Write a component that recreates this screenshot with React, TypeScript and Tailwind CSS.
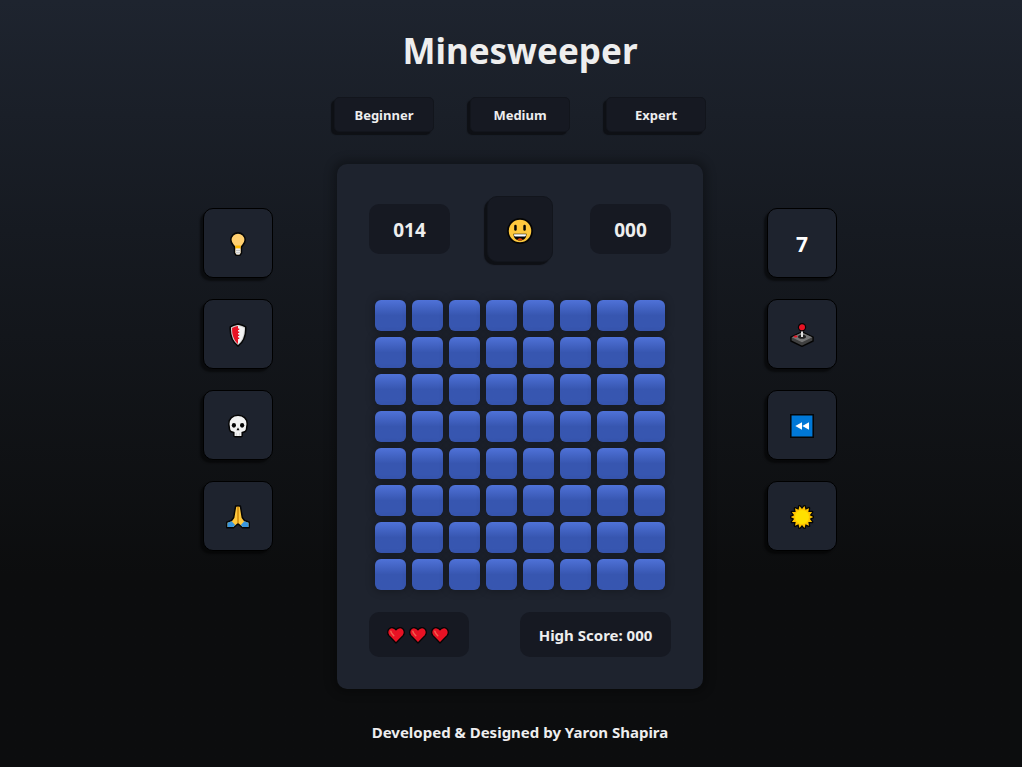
import type { ReactNode } from "react";

function Bulb() {
  return (
    <svg viewBox="0 0 24 24" className="size-6" aria-hidden="true">
      <path d="M12 .9a7.200 7.200 0 0 0-7.200 7.200c0 3.200 2.600 4.700 3.800 7.100V21l1.500 2.200h3.800l1.500-2.200v-5.800c1.200-2.400 3.800-3.900 3.800-7.100A7.200 7.200 0 0 0 12 .9z" fill="#ffcf70" stroke="#050505" strokeWidth="1.600" />
      <path d="M9.400 13.500h5.200v3H9.400z" fill="#ffb900" />
      <path d="M9.500 16.500h5V21l-1 1.400h-3l-1-1.400z" fill="#ececec" />
      <path d="M9.600 18.500h4.800M9.800 20.700h4.400" stroke="#b9b9b9" strokeWidth="0.800" />
    </svg>
  );
}

function Shield() {
  return (
    <svg viewBox="0 0 24 24" className="size-6" aria-hidden="true">
      <path d="M12 1C9.500 1.600 7 2.200 4.300 3.800c-.6 8 1.200 14.200 7.700 19.400 6.500-5.200 8.300-11.400 7.700-19.400C17 2.200 14.500 1.600 12 1z" fill="#d2d2d2" stroke="#050505" strokeWidth="1.500" strokeLinejoin="round" />
      <path d="M12 3c-2.200.4-4 1-5.900 2-.2 6.500 1.300 11.800 5.900 16.100z" fill="#e81224" />
      <path d="M12 3c2.200.4 4 1 5.900 2 .2 6.500-1.300 11.800-5.900 16.100z" fill="#f2f2f2" />
      <path d="M12 5.500h1.200v1.500H12zM12 8.500h1.200V10H12zM12 11.500h1.200V13H12zM12 14.500h1.200V16H12z" fill="#e81224" />
    </svg>
  );
}

function Skull() {
  return (
    <svg viewBox="0 0 24 24" className="size-6" aria-hidden="true">
      <path d="M12 1.300c-5.400 0-9.200 3.500-9.200 8.500 0 2 .6 3.200.6 4.800 0 2.700 1.300 3.500 4.400 4v2.800c0 .8.500 1.300 1.300 1.300h5.800c.8 0 1.300-.5 1.300-1.300v-2.800c3.100-.5 4.400-1.300 4.400-4 0-1.600.6-2.800.6-4.800 0-5-3.800-8.500-9.200-8.500z" fill="#f2f2f2" stroke="#050505" strokeWidth="1.500" />
      <ellipse cx="7.900" cy="11.300" rx="2.100" ry="2.400" fill="#050505" />
      <ellipse cx="16.100" cy="11.300" rx="2.100" ry="2.400" fill="#050505" />
      <path d="m12 13.500 1.500 2.800h-3z" fill="#050505" />
      <path d="M10.400 19.200v2.600M13.600 19.200v2.600" stroke="#cfcfcf" strokeWidth="0.800" />
    </svg>
  );
}

function Hands() {
  return (
    <svg viewBox="0 0 24 24" className="size-6" aria-hidden="true">
      <path d="M9.600 1h4.800l1.900 11.500 2.200 3 4.700 1.800v5.500h-6.700L12 18.800l-4.500 4H.8v-5.500l4.700-1.800 2.200-3z" fill="#ffc83d" stroke="#050505" strokeWidth="1.500" strokeLinejoin="round" />
      <path d="m1.500 17.800 4.200-1.600 3.600 4-2.100 1.900H1.500zM22.500 17.800l-4.200-1.600-3.600 4 2.100 1.900h5.700z" fill="#3a96dd" />
      <path d="M12 1.800v16.500" stroke="#d99414" strokeWidth="1.800" />
    </svg>
  );
}

function Joystick() {
  return (
    <svg viewBox="0 0 24 24" className="size-6" aria-hidden="true">
      <path d="M.9 14.200 12 8.800l11.100 5.400v3.800L12 23.300.9 18z" fill="#404040" stroke="#050505" strokeWidth="1.400" strokeLinejoin="round" />
      <path d="M1.700 14.300 12 9.500l10.300 4.800L12 19.200z" fill="#767676" />
      <ellipse cx="12" cy="13.800" rx="4" ry="2" fill="#202020" />
      <path d="M12 7v7" stroke="#e0e0e0" strokeWidth="2" />
      <circle cx="12" cy="4.300" r="3.600" fill="#e81224" stroke="#050505" strokeWidth="1.200" />
      <ellipse cx="5.600" cy="13.600" rx="2" ry="1" fill="#e81224" />
    </svg>
  );
}

function Rewind() {
  return (
    <svg viewBox="0 0 24 24" className="size-6" aria-hidden="true">
      <path d="M.8.800h22.400v22.400H.8z" fill="#0078d7" stroke="#050505" strokeWidth="1.500" />
      <path d="m12 8.300-6.700 3.700 6.700 3.700zM19 8.300 12.300 12l6.700 3.700z" fill="#fff" />
    </svg>
  );
}

const sunPoints = Array.from({ length: 28 }, (_, i) => {
  const radius = i % 2 ? 8 : 11.2;
  const angle = (i * Math.PI) / 14 - Math.PI / 2 + Math.PI / 14;
  return `${(12 + radius * Math.cos(angle)).toFixed(1)},${(12 + radius * Math.sin(angle)).toFixed(1)}`;
}).join(" ");

function Sun() {
  return (
    <svg viewBox="0 0 24 24" className="size-6" aria-hidden="true">
      <polygon points={sunPoints} fill="#ffb900" stroke="#050505" strokeWidth="2.600" strokeLinejoin="round" />
      <polygon points={sunPoints} fill="#ffc400" />
      <circle cx="12" cy="12" r="7" fill="#ffe000" />
    </svg>
  );
}

function Smiley() {
  return (
    <svg viewBox="0 0 26 26" className="size-[26px]" aria-hidden="true">
      <circle cx="13" cy="13" r="12.100" fill="#ffc83d" stroke="#050505" strokeWidth="1.700" />
      <rect x="7.200" y="6.800" width="2.500" height="6" rx="1.200" fill="#050505" />
      <rect x="16.300" y="6.800" width="2.500" height="6" rx="1.200" fill="#050505" />
      <path d="M6.500 15.800h13c0 4.300-2.500 6.800-6.500 6.800s-6.500-2.500-6.500-6.800z" fill="#050505" />
      <path d="M7 16.200h12c0 1.300-.4 2.300-1 2.300H8c-.6 0-1-1-1-2.300z" fill="#fff" />
      <path d="M10.300 21.700c.7-2 4.700-2 5.400 0-1.600.8-3.800.8-5.400 0z" fill="#da3b01" />
    </svg>
  );
}

function Heart() {
  return (
    <svg viewBox="0 0 18 18" className="size-[18px]" aria-hidden="true">
      <path d="M9 17 1.900 9.600C.1 7.600.4 4.300 2.200 2.800c2-1.700 5-1.400 6.800 1 1.800-2.400 4.800-2.700 6.800-1 1.800 1.500 2.100 4.800.3 6.800z" fill="#e81224" stroke="#050505" strokeWidth="1.300" strokeLinejoin="round" />
      <path d="M3.800 5.200c.2 1.900 1.500 2.800 3 4.500" fill="none" stroke="#f0604f" strokeWidth="1.500" strokeLinecap="round" />
    </svg>
  );
}

function ToolButton({ label, children }: { label: string; children: ReactNode }) {
  return (
    <button
      type="button"
      aria-label={label}
      className="grid size-[70px] place-items-center rounded-[10px] border border-black bg-[#1e232e] pt-px text-[21px] leading-6 font-bold text-white shadow-[-3px_3px_2px_rgba(0,0,0,0.5)]"
    >
      {children}
    </button>
  );
}

const levels = ["Beginner", "Medium", "Expert"];
const size = 8;

export default function App() {
  return (
    <div className="flex min-h-screen flex-col items-center bg-linear-to-b from-[#1e242f] via-[#161a21] via-30% to-[#0c0d0e] to-75% pt-[25px] pb-6 pl-[18px] font-['Noto_Sans','Open_Sans',sans-serif] font-bold text-[#eee]">
      <h1 className="text-[35px] leading-[52px]">Minesweeper</h1>

      <nav aria-label="Difficulty" className="mt-5 flex gap-9">
        {levels.map((level) => (
          <button
            key={level}
            type="button"
            className="h-[35px] w-[100px] rounded-[5px] border border-[#12151c] bg-[#161922] pt-[3px] text-[13px] shadow-[-3px_3px_1px_#0e1015]"
          >
            {level}
          </button>
        ))}
      </nav>

      <div className="mt-8 flex items-start gap-16">
        <aside aria-label="Helpers" className="mt-11 flex flex-col gap-[21px]">
          <ToolButton label="Hint"><Bulb /></ToolButton>
          <ToolButton label="Safe click"><Shield /></ToolButton>
          <ToolButton label="Exterminator"><Skull /></ToolButton>
          <ToolButton label="Mega hint"><Hands /></ToolButton>
        </aside>

        <main className="flex flex-col items-center rounded-[10px] bg-[#1e232e] p-8 shadow-[0_0_10px_4px_rgba(0,0,0,0.3)]">
          <div className="flex w-full items-center justify-between">
            <output className="grid h-[50px] w-[81px] place-items-center rounded-[10px] bg-[#161922] pt-[3px] text-[19px]">014</output>
            <button
              type="button"
              aria-label="Restart"
              className="grid size-[66px] place-items-center rounded-[10px] border border-[#12151c] bg-[#161922] pt-[3px] shadow-[-3px_3px_1px_#0e1015]"
            >
              <Smiley />
            </button>
            <output className="grid h-[50px] w-[81px] place-items-center rounded-[10px] bg-[#161922] pt-[3px] text-[19px]">000</output>
          </div>

          <div className="mx-[6px] mt-[38px] mb-[22px] grid grid-cols-8 gap-[6px]">
            {Array.from({ length: size * size }, (_, i) => (
              <button
                key={i}
                type="button"
                aria-label={`Row ${Math.floor(i / size) + 1}, column ${(i % size) + 1}`}
                className="size-[31px] rounded-md bg-linear-to-b from-[#4f72d8] to-[#3756b0] to-50% shadow-[0_0_8px_1px_rgba(0,0,0,0.3)]"
              />
            ))}
          </div>

          <div className="flex w-full items-center justify-between">
            <div role="img" aria-label="3 lives" className="flex h-[45px] w-[100px] items-center gap-1 rounded-[10px] bg-[#161922] pt-px pl-[18px]">
              <Heart />
              <Heart />
              <Heart />
            </div>
            <p className="grid h-[45px] w-[151px] place-items-center rounded-[10px] bg-[#161922] pt-px text-[15px]">High Score: 000</p>
          </div>
        </main>

        <aside aria-label="Actions" className="mt-11 flex flex-col gap-[21px]">
          <ToolButton label="7 boom">7</ToolButton>
          <ToolButton label="Manual mode"><Joystick /></ToolButton>
          <ToolButton label="Undo"><Rewind /></ToolButton>
          <ToolButton label="Light mode"><Sun /></ToolButton>
        </aside>
      </div>

      <footer className="mt-8 text-[15px] leading-[22px]">Developed &amp; Designed by Yaron Shapira</footer>
    </div>
  );
}
